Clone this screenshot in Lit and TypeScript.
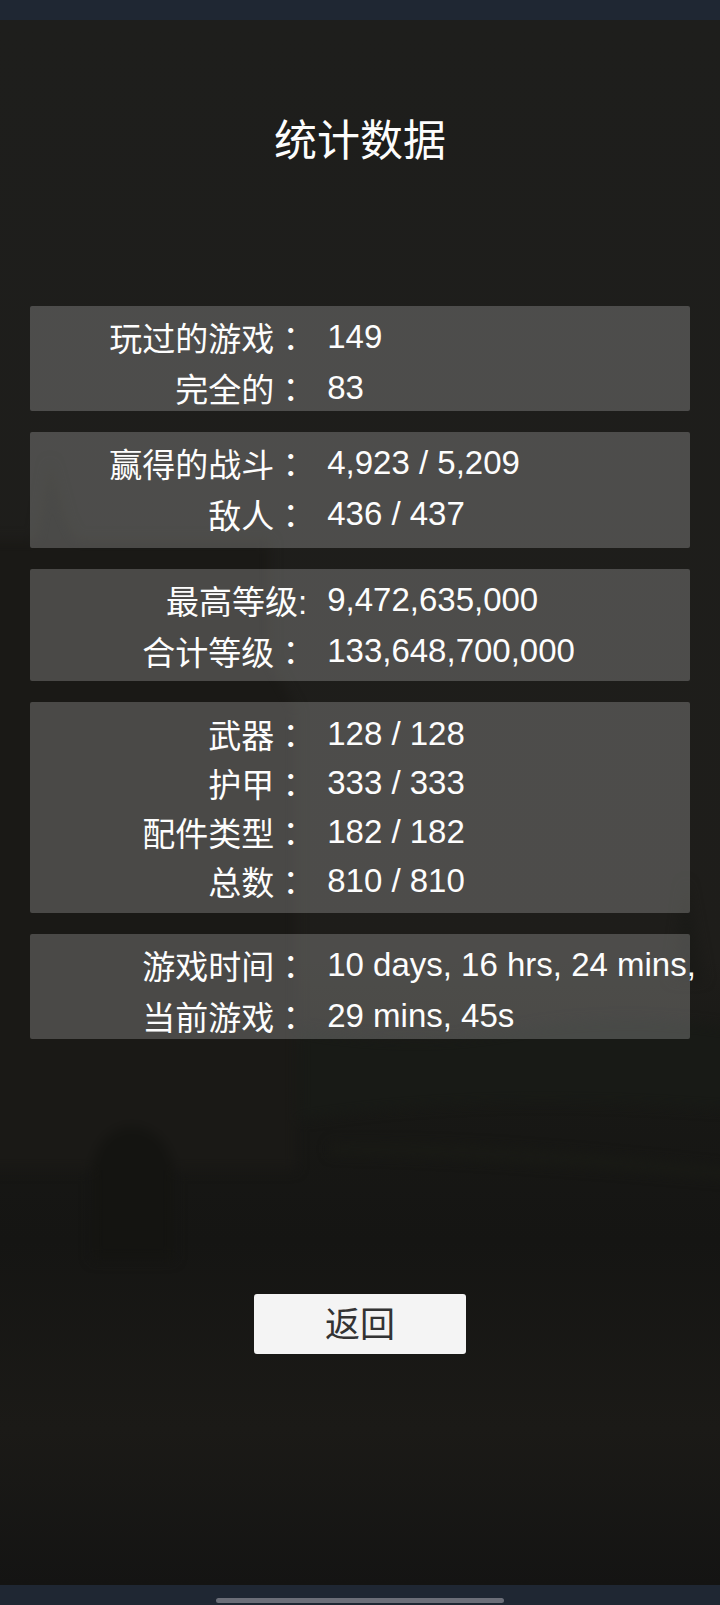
import { LitElement, html, css } from "lit";
import { customElement, property } from "lit/decorators.js";
import { classMap } from "lit/directives/class-map.js";

interface Stat {
  label: string;
  colon: string;
  value: string;
}

interface StatGroup {
  size: "tight" | "roomy" | "medium" | "tall";
  stats: Stat[];
}

const WIDE = "：";

const GROUPS: StatGroup[] = [
  {
    size: "tight",
    stats: [
      { label: "玩过的游戏", colon: WIDE, value: "149" },
      { label: "完全的", colon: WIDE, value: "83" },
    ],
  },
  {
    size: "roomy",
    stats: [
      { label: "赢得的战斗", colon: WIDE, value: "4,923 / 5,209" },
      { label: "敌人", colon: WIDE, value: "436 / 437" },
    ],
  },
  {
    size: "medium",
    stats: [
      { label: "最高等级", colon: ":", value: "9,472,635,000" },
      { label: "合计等级", colon: WIDE, value: "133,648,700,000" },
    ],
  },
  {
    size: "tall",
    stats: [
      { label: "武器", colon: WIDE, value: "128 / 128" },
      { label: "护甲", colon: WIDE, value: "333 / 333" },
      { label: "配件类型", colon: WIDE, value: "182 / 182" },
      { label: "总数", colon: WIDE, value: "810 / 810" },
    ],
  },
  {
    size: "tight",
    stats: [
      { label: "游戏时间", colon: WIDE, value: "10 days, 16 hrs, 24 mins," },
      { label: "当前游戏", colon: WIDE, value: "29 mins, 45s" },
    ],
  },
];

@customElement("stat-card")
export class StatCard extends LitElement {
  @property({ attribute: false }) group!: StatGroup;

  static styles = css`
    :host {
      display: block;
    }
    .card {
      display: grid;
      grid-template-columns: 42% 1fr;
      gap: 5px 20px;
      grid-auto-rows: 46px;
      margin: 0;
      padding: 8px 0 0;
      border-radius: 2px;
      background: rgba(255, 255, 255, 0.21);
      color: #fdfdfd;
      font-size: 33px;
      line-height: 46px;
      white-space: nowrap;
    }
    .roomy {
      padding-bottom: 11px;
    }
    .medium {
      padding-bottom: 7px;
    }
    .tall {
      row-gap: 3px;
      padding: 9px 0;
    }
    .label {
      margin: 0;
      padding-top: 3px;
      text-align: right;
      font-family: "Liberation Sans", "Noto Sans CJK SC", sans-serif;
    }
    .colon {
      font-family: "Liberation Sans", "Noto Sans CJK TC", sans-serif;
    }
    .value {
      margin: 0;
      min-width: 0;
      font-family: "Liberation Sans", Arial, sans-serif;
    }
  `;

  render() {
    return html`
      <dl class=${classMap({ card: true, [this.group.size]: true })}>
        ${this.group.stats.map(
          (s) => html`
            <dt class="label">${s.label}<span class="colon" lang="zh-TW">${s.colon}</span></dt>
            <dd class="value">${s.value}</dd>
          `
        )}
      </dl>
    `;
  }
}

@customElement("castle-backdrop")
export class CastleBackdrop extends LitElement {
  static styles = css`
    :host {
      display: block;
    }
    .scene {
      display: block;
      width: 100%;
      height: 100%;
    }
  `;

  render() {
    return html`
      <svg class="scene" viewBox="0 0 720 1565" preserveAspectRatio="none" aria-hidden="true">
        <defs>
          <linearGradient id="sky" x1="0" y1="0" x2="0" y2="1">
            <stop offset="0" stop-color="#1e1e1c" />
            <stop offset="0.6" stop-color="#1e1d1a" />
            <stop offset="0.68" stop-color="#181815" />
            <stop offset="0.78" stop-color="#151513" />
            <stop offset="0.9" stop-color="#1b1a17" />
            <stop offset="1" stop-color="#141413" />
          </linearGradient>
          <filter id="soft" color-interpolation-filters="sRGB">
            <feGaussianBlur stdDeviation="6" />
          </filter>
        </defs>
        <rect width="720" height="1565" fill="url(#sky)" />
        <g filter="url(#soft)">
          <path d="M36 520L50 440L66 500L82 530V560H36Z" fill="#1a1a17" />
          <path d="M-20 520H270V640L296 690V1150H-20Z" fill="#1a1916" />
          <path d="M300 1010Q420 1030 520 1010T740 1010V1090Q480 1070 300 1100Z" fill="#181a16" />
          <path d="M672 960L686 860L704 960Z" fill="#1a1a17" />
          <path d="M92 1240V1150Q96 1110 132 1106Q168 1110 174 1150V1240Z" fill="#141411" />
          <path d="M330 1124Q480 1120 740 1150V1160Q480 1136 330 1134Z" fill="#191a15" />
        </g>
      </svg>
    `;
  }
}

@customElement("app-root")
export class AppRoot extends LitElement {
  static styles = css`
    :host {
      display: flex;
      flex-direction: column;
      min-height: 100vh;
      background: #1f2733;
      font-family: "Liberation Sans", "Noto Sans CJK SC", sans-serif;
    }
    .status {
      height: 20px;
    }
    .screen {
      position: relative;
      flex: 1;
      display: flex;
      flex-direction: column;
      padding: 97px 30px 0;
      overflow: hidden;
      background: #1b1b19;
    }
    .backdrop {
      position: absolute;
      inset: 0;
    }
    .title {
      position: relative;
      margin: 0;
      text-align: center;
      font-size: 43px;
      line-height: 48px;
      font-weight: 400;
      color: #fdfdfd;
    }
    .stats {
      position: relative;
      display: flex;
      flex-direction: column;
      gap: 21px;
      margin-top: 141px;
    }
    .back {
      position: relative;
      align-self: center;
      width: 32%;
      margin: 255px 0 60px;
      padding: 2px 0 0;
      border: 0;
      border-radius: 3px;
      background: #f4f4f4;
      color: #333;
      font: inherit;
      font-size: 35px;
      line-height: 58px;
    }
    .nav {
      display: flex;
      justify-content: center;
      padding: 13px 0 2px;
    }
    .handle {
      width: 40%;
      height: 5px;
      border-radius: 3px;
      background: #6b6e78;
    }
  `;

  render() {
    return html`
      <div class="status"></div>
      <main class="screen" lang="zh-CN">
        <castle-backdrop class="backdrop"></castle-backdrop>
        <h1 class="title">统计数据</h1>
        <section class="stats">
          ${GROUPS.map((g) => html`<stat-card .group=${g}></stat-card>`)}
        </section>
        <button class="back" type="button">返回</button>
      </main>
      <div class="nav"><div class="handle"></div></div>
    `;
  }
}
